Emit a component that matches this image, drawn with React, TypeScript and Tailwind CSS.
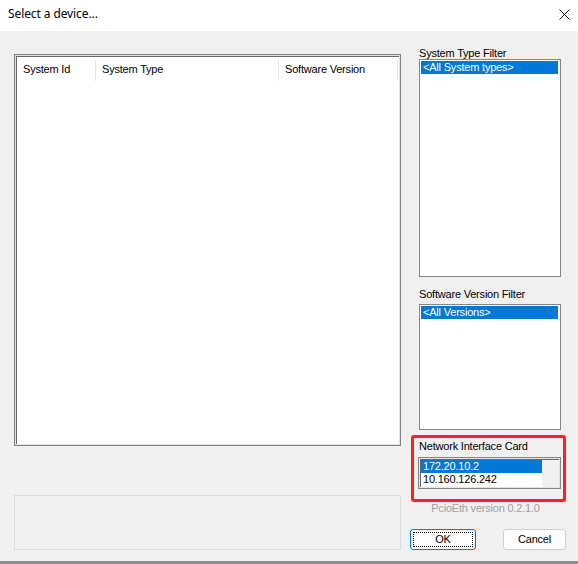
import React from "react";

function FilterList({ h, item, className = "" }: { h: string; item: string; className?: string }) {
  return (
    <div className={`ml-[9px] w-[142px] ${h} border border-[#828790] bg-white p-px ${className}`}>
      <div className="h-[13px] mr-px bg-[#0078d7] pl-[2px] leading-[13px] text-white whitespace-nowrap">{item}</div>
    </div>
  );
}

export default function App() {
  return (
    <div className="w-[578px] h-[564px] flex flex-col bg-[#8c8c8c] font-['Liberation_Sans',Arial,sans-serif] text-[11px] tracking-[-0.2px] text-black">
      {/* Title bar */}
      <div className="h-[31px] bg-white flex justify-between pl-[8px] pr-[8px]">
        <div className="pt-[6px] leading-[16px] text-[12px] tracking-[-0.1px] font-['Noto_Sans',sans-serif]">Select a device...</div>
        <svg width="11" height="11" viewBox="0 0 11 11" className="mt-[9px]">
          <path d="M0.5 0.5 L10.5 10.5 M10.5 0.5 L0.5 10.5" stroke="#111" strokeWidth="1" fill="none" />
        </svg>
      </div>

      {/* Body */}
      <div className="h-[530px] bg-[#f0f0f0] flex pl-[14px]">
        {/* Left column */}
        <div className="w-[387px] flex flex-col pt-[23px]">
          <div className="h-[392px] flex border border-[#828282] bg-[#e3e3e3] p-px">
            <div className="flex-1 bg-white border-t border-l border-[#696969]">
              <div className="flex h-[24px]">
                <div className="w-[79px] flex">
                  <div className="flex-1 pl-[6px] pt-[6px] leading-[13px] whitespace-nowrap">System Id</div>
                  <div className="w-px h-[21px] mt-[3px] bg-[#e5e5e5]" />
                </div>
                <div className="w-[183px] flex">
                  <div className="flex-1 pl-[6px] pt-[6px] leading-[13px] whitespace-nowrap">System Type</div>
                  <div className="w-px h-[21px] mt-[3px] bg-[#e5e5e5]" />
                </div>
                <div className="w-[119px] flex">
                  <div className="flex-1 pl-[6px] pt-[6px] leading-[13px] whitespace-nowrap">Software Version</div>
                  <div className="w-px h-[21px] mt-[3px] bg-[#e5e5e5]" />
                </div>
              </div>
            </div>
          </div>
          <div className="mt-[49px] h-[55px] border border-[#dcdcdc]" />
        </div>

        {/* Right column */}
        <div className="ml-[9px] w-[156px] flex flex-col pt-[17px]">
          <div className="ml-[9px] h-[11px] leading-[11px] whitespace-nowrap">System Type Filter</div>
          <FilterList h="h-[218px]" item="<All System types>" />
          <div className="ml-[9px] mt-[12px] h-[11px] leading-[11px] whitespace-nowrap">Software Version Filter</div>
          <FilterList h="h-[126px]" item="<All Versions>" className="mt-[4px]" />

          <div className="mt-[5px] ml-px w-[155px] border-[3px] border-[#ff1f1f] rounded-[3px] pt-[3px] pb-[10px] pl-[4px] pr-[2px]">
            <div className="ml-px h-[11px] leading-[11px] whitespace-nowrap">Network Interface Card</div>
            <div className="mt-[5px] h-[32px] flex border border-[#828790] bg-[#e3e3e3] p-px">
              <div className="flex-1 flex bg-white border-t border-l border-[#696969]">
                <div className="flex-1 flex flex-col">
                  <div className="h-[13px] bg-[#0078d7] text-white pl-[2px] leading-[13px]">172.20.10.2</div>
                  <div className="h-[13px] pl-[2px] leading-[13px]">10.160.126.242</div>
                </div>
                <div className="w-[17px] bg-[#f0f0f0]" />
              </div>
            </div>
          </div>

          <div className="h-[13px] leading-[13px] text-center pr-[5px] text-[#a0a0a0] whitespace-nowrap">PcioEth version 0.2.1.0</div>

          <div className="mt-[14px] flex justify-between">
            <div className="w-[66px] h-[21px] border border-[#0078d7] rounded-[3px] bg-[#fdfdfd] p-[2px]">
              <div className="h-full border border-dotted border-black flex items-center justify-center leading-[13px]">OK</div>
            </div>
            <div className="w-[63px] h-[21px] border border-[#d0d0d0] rounded-[3px] bg-[#fdfdfd] flex items-center justify-center leading-[13px]">Cancel</div>
          </div>
        </div>
      </div>

      {/* Bottom strip (background behind the dialog) */}
      <div className="h-[3px] bg-[#8c8c8c]" />
    </div>
  );
}
